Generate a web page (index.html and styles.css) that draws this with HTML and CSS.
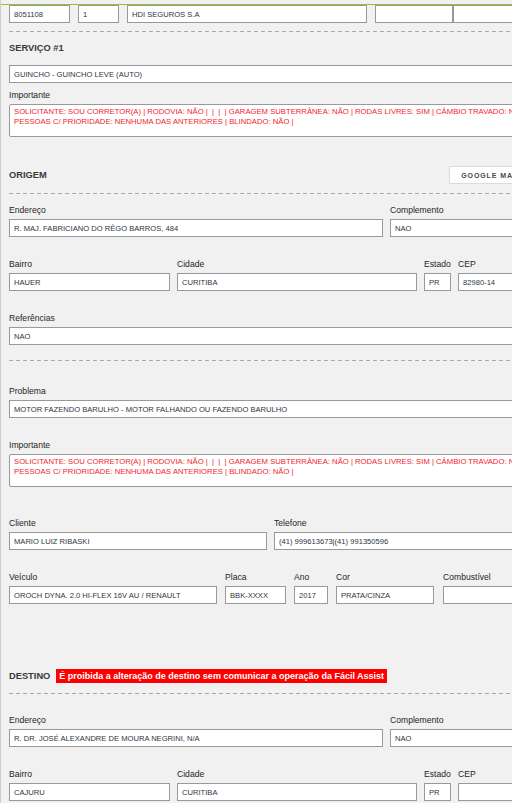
FILE: index.html
```html
<!DOCTYPE html>
<html lang="pt-BR">
<head>
  <meta charset="UTF-8" />
  <title>Atendimento – Serviço #1</title>
  <link rel="stylesheet" href="styles.css">
</head>
<body>

<div class="topline"></div>

<div class="page">
  <div class="row row-top">
    <input class="input f-protocolo" value="8051108" readonly>
    <input class="input f-seq" value="1" readonly>
    <input class="input f-seguradora" value="HDI SEGUROS S.A" readonly>
    <div class="pair">
      <input class="input f-extra" value="" readonly>
      <input class="input" value="" readonly>
    </div>
  </div>

  <div class="dash dash-top"></div>

  <!-- Serviço -->
  <div class="section-title title-servico">SERVIÇO #1</div>
  <input class="input mt-servico" value="GUINCHO - GUINCHO LEVE (AUTO)" readonly>

  <div class="field mt-imp1">
    <label>Importante</label>
    <textarea class="note" wrap="off" readonly>SOLICITANTE: SOU CORRETOR(A) | RODOVIA: NÃO |  |  |  | GARAGEM SUBTERRÂNEA: NÃO | RODAS LIVRES: SIM | CÂMBIO TRAVADO: NÃO |
PESSOAS C/ PRIORIDADE: NENHUMA DAS ANTERIORES | BLINDADO: NÃO |</textarea>
  </div>

  <!-- Origem -->
  <div class="section-head head-origem">
    <div class="section-title">ORIGEM</div>
    <button class="btn-maps">GOOGLE MAPS</button>
  </div>
  <div class="dash dash-head"></div>

  <div class="row mt-first">
    <div class="field f-endereco">
      <label>Endereço</label>
      <input class="input" value="R. MAJ. FABRICIANO DO RÊGO BARROS, 484" readonly>
    </div>
    <div class="field grow">
      <label>Complemento</label>
      <input class="input" value="NAO" readonly>
    </div>
  </div>

  <div class="row mt-row">
    <div class="field f-bairro">
      <label>Bairro</label>
      <input class="input" value="HAUER" readonly>
    </div>
    <div class="field f-cidade">
      <label>Cidade</label>
      <input class="input" value="CURITIBA" readonly>
    </div>
    <div class="field f-estado">
      <label>Estado</label>
      <input class="input" value="PR" readonly>
    </div>
    <div class="field grow">
      <label>CEP</label>
      <input class="input" value="82980-14" readonly>
    </div>
  </div>

  <div class="field mt-row">
    <label>Referências</label>
    <input class="input" value="NAO" readonly>
  </div>

  <div class="dash dash-mid"></div>

  <!-- Problema -->
  <div class="field mt-problema">
    <label>Problema</label>
    <input class="input" value="MOTOR FAZENDO BARULHO - MOTOR FALHANDO OU FAZENDO BARULHO" readonly>
  </div>

  <div class="field mt-row">
    <label>Importante</label>
    <textarea class="note" wrap="off" readonly>SOLICITANTE: SOU CORRETOR(A) | RODOVIA: NÃO |  |  |  | GARAGEM SUBTERRÂNEA: NÃO | RODAS LIVRES: SIM | CÂMBIO TRAVADO: NÃO |
PESSOAS C/ PRIORIDADE: NENHUMA DAS ANTERIORES | BLINDADO: NÃO |</textarea>
  </div>

  <!-- Cliente / veículo -->
  <div class="row mt-cliente">
    <div class="field f-cliente">
      <label>Cliente</label>
      <input class="input" value="MARIO LUIZ RIBASKI" readonly>
    </div>
    <div class="field grow">
      <label>Telefone</label>
      <input class="input" value="(41) 999613673|(41) 991350596" readonly>
    </div>
  </div>

  <div class="row row-veiculo mt-row">
    <div class="field f-veiculo">
      <label>Veículo</label>
      <input class="input" value="OROCH DYNA. 2.0 HI-FLEX 16V AU / RENAULT" readonly>
    </div>
    <div class="field f-placa">
      <label>Placa</label>
      <input class="input" value="BBK-XXXX" readonly>
    </div>
    <div class="field f-ano">
      <label>Ano</label>
      <input class="input" value="2017" readonly>
    </div>
    <div class="field f-cor">
      <label>Cor</label>
      <input class="input" value="PRATA/CINZA" readonly>
    </div>
    <div class="field grow f-comb">
      <label>Combustível</label>
      <input class="input" value="" readonly>
    </div>
  </div>

  <!-- Destino -->
  <div class="section-head head-destino">
    <div class="section-title">DESTINO</div>
    <span class="warn">É proibida a alteração de destino sem comunicar a operação da Fácil Assist</span>
  </div>
  <div class="dash dash-head"></div>

  <div class="row mt-destino">
    <div class="field f-endereco">
      <label>Endereço</label>
      <input class="input" value="R. DR. JOSÉ ALEXANDRE DE MOURA NEGRINI, N/A" readonly>
    </div>
    <div class="field grow">
      <label>Complemento</label>
      <input class="input" value="NAO" readonly>
    </div>
  </div>

  <div class="row mt-row">
    <div class="field f-bairro">
      <label>Bairro</label>
      <input class="input" value="CAJURU" readonly>
    </div>
    <div class="field f-cidade">
      <label>Cidade</label>
      <input class="input" value="CURITIBA" readonly>
    </div>
    <div class="field f-estado">
      <label>Estado</label>
      <input class="input" value="PR" readonly>
    </div>
    <div class="field grow">
      <label>CEP</label>
      <input class="input" value="" readonly>
    </div>
  </div>
</div>

</body>
</html>
```

FILE: styles.css
```css
:root {
  --bg: #f1f1f1;
  --border: #999;
  --text: #262626;
  --field-text: #2e3542;
  --note: #f21c2e;
  --brand: #9dc12c;
}

html, body {
  margin: 0;
  height: 100%;
  overflow: hidden;
}

body {
  background: var(--bg);
  color: var(--text);
  font-family: "Liberation Sans", Arial, sans-serif;
  border-left: 1px solid #cdcdcd;
}

.topline {
  height: 4px;
  border-bottom: 1px solid var(--brand);
}

.page {
  width: 527px;
  padding-left: 8px;
}

/* rows and fields */
.row {
  display: flex;
  gap: 7px;
}

.row-top { gap: 8px; }
.row-veiculo { gap: 8px; }

.pair {
  display: flex;
  flex: 1;
}
.pair .input:last-child { flex: 1; }

.field label {
  display: block;
  font-size: 8.6px;
  line-height: 12px;
  margin-bottom: 3px;
  color: var(--text);
}

.grow { flex: 1; }

.input {
  display: block;
  box-sizing: border-box;
  width: 100%;
  height: 18px;
  margin: 0;
  padding: 0 4px;
  border: 1px solid var(--border);
  background: #fff;
  font-family: "Liberation Sans", Arial, sans-serif;
  font-size: 7.6px;
  color: var(--field-text);
  outline: none;
}

.note {
  display: block;
  box-sizing: border-box;
  width: 100%;
  height: 33px;
  margin: 0;
  padding: 2px 4px;
  border: 1px solid var(--border);
  border-radius: 2px;
  background: #fff;
  font-family: "Liberation Sans", Arial, sans-serif;
  font-size: 7.7px;
  line-height: 10px;
  color: var(--note);
  resize: none;
  overflow: hidden;
  outline: none;
}

/* field widths */
.f-protocolo { width: 61px; }
.f-seq { width: 41px; }
.f-seguradora { width: 240px; }
.pair .f-extra { width: 78px; }

.f-endereco { width: 374px; flex: none; }
.f-bairro { width: 161px; flex: none; }
.f-cidade { width: 240px; flex: none; }
.f-estado { width: 27px; flex: none; }
.f-cliente { width: 258px; flex: none; }
.f-veiculo { width: 208px; flex: none; }
.f-placa { width: 61px; flex: none; }
.f-ano { width: 34px; flex: none; }
.f-cor { width: 98px; flex: none; }
.f-comb { margin-left: 1px; }

/* section headers */
.section-title {
  font-size: 9.3px;
  font-weight: bold;
  line-height: 14px;
  color: #3a3a3a;
}

.section-head {
  display: flex;
  align-items: center;
  height: 18px;
}

.btn-maps {
  margin-left: auto;
  height: 18px;
  padding: 0 11px;
  border: 1px solid #dcdcdc;
  background: #fff;
  font-family: "Liberation Sans", Arial, sans-serif;
  font-size: 7px;
  font-weight: bold;
  letter-spacing: 0.9px;
  color: #4a4a4a;
}

.warn {
  margin-left: 6px;
  padding: 0 3px;
  background: #ff0000;
  color: #fff;
  font-size: 9px;
  font-weight: bold;
  line-height: 14px;
}

.dash {
  height: 1px;
  background: repeating-linear-gradient(90deg, #a9a9a9 0 4px, transparent 4px 7px);
}

/* vertical rhythm */
.dash-top { margin-top: 8px; }
.title-servico { margin-top: 9px; }
.mt-servico { margin-top: 10px; }
.mt-imp1 { margin-top: 6px; }
.head-origem { margin-top: 29px; }
.dash-head { margin-top: 9px; }
.mt-first { margin-top: 10px; }
.mt-row { margin-top: 21px; }
.dash-mid { margin-top: 15px; }
.mt-problema { margin-top: 24px; }
.mt-cliente { margin-top: 30px; }
.head-destino { margin-top: 63px; }
.head-destino + .dash-head { margin-top: 8px; }
.mt-destino { margin-top: 20px; }
```
